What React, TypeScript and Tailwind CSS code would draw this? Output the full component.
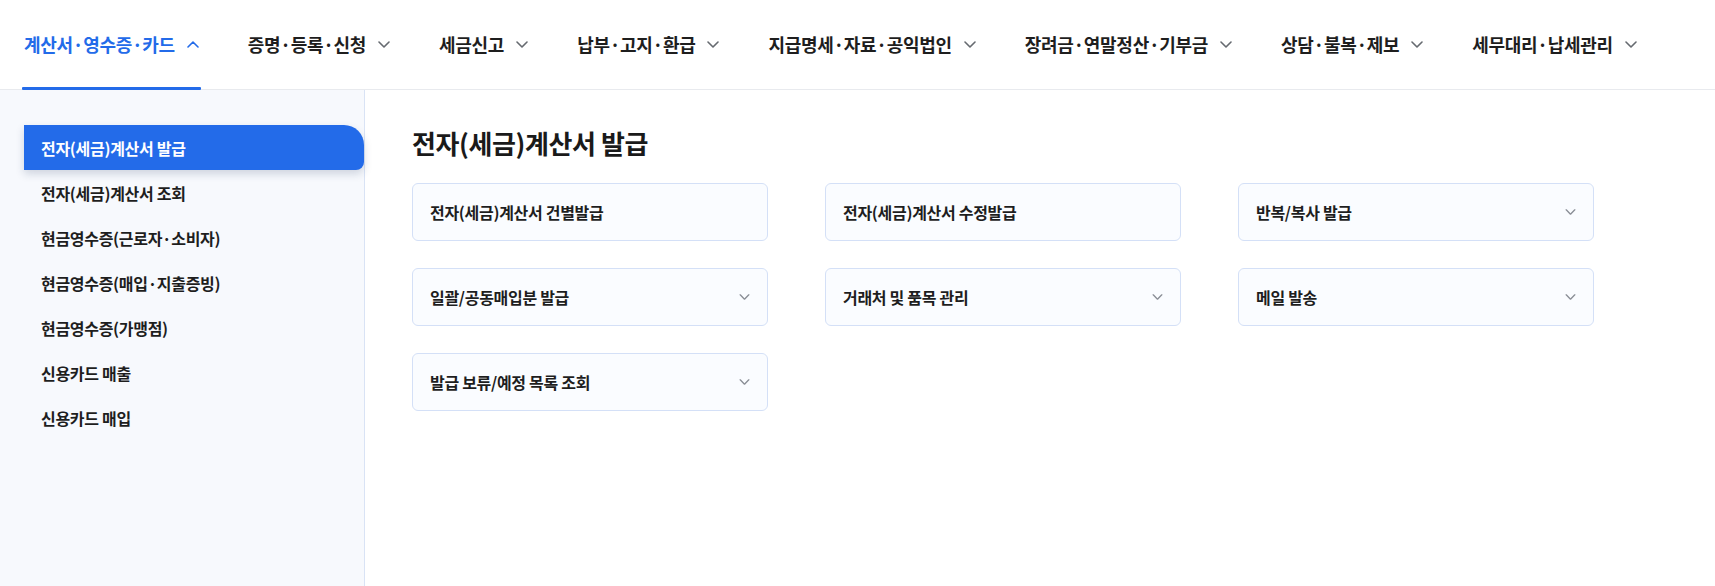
import React from "react";

const navItems = [
  "계산서·영수증·카드",
  "증명·등록·신청",
  "세금신고",
  "납부·고지·환급",
  "지급명세·자료·공익법인",
  "장려금·연말정산·기부금",
  "상담·불복·제보",
  "세무대리·납세관리",
];

const sideItems = [
  "전자(세금)계산서 발급",
  "전자(세금)계산서 조회",
  "현금영수증(근로자·소비자)",
  "현금영수증(매입·지출증빙)",
  "현금영수증(가맹점)",
  "신용카드 매출",
  "신용카드 매입",
];

const cards: { label: string; chevron: boolean }[] = [
  { label: "전자(세금)계산서 건별발급", chevron: false },
  { label: "전자(세금)계산서 수정발급", chevron: false },
  { label: "반복/복사 발급", chevron: true },
  { label: "일괄/공동매입분 발급", chevron: true },
  { label: "거래처 및 품목 관리", chevron: true },
  { label: "메일 발송", chevron: true },
  { label: "발급 보류/예정 목록 조회", chevron: true },
];

function Chevron({ up, className }: { up?: boolean; className?: string }) {
  return (
    <svg viewBox="0 0 12 7" className={className} fill="none">
      <path
        d={up ? "M1 6 L6 1 L11 6" : "M1 1 L6 6 L11 1"}
        stroke="currentColor"
        strokeWidth="1.6"
        strokeLinecap="round"
        strokeLinejoin="round"
      />
    </svg>
  );
}

export default function App() {
  return (
    <div
      className="h-screen w-full bg-white flex flex-col text-[#222]"
      style={{ fontFamily: '"Noto Sans CJK KR", "Noto Sans", sans-serif' }}
    >
      <header className="h-[90px] shrink-0 border-b border-[#e8eaee] flex items-stretch pl-[24px] gap-[49px]">
        {navItems.map((t, i) => (
          <div key={t} className="relative flex items-center gap-[12px]">
            <span
              className={
                "text-[18px] font-semibold tracking-[-0.3px] " +
                (i === 0 ? "text-[#236be9]" : "text-[#1e1e1e]")
              }
            >
              {t}
            </span>
            {i === 0 ? (
              <Chevron up className="w-[12px] h-[7px] text-[#236be9]" />
            ) : (
              <Chevron className="w-[12px] h-[7px] text-[#666a70]" />
            )}
            {i === 0 && (
              <div className="absolute left-[-2px] right-[-2px] bottom-[-1px] h-[3px] bg-[#236be9] rounded-[1px]" />
            )}
          </div>
        ))}
      </header>
      <div className="flex flex-1 min-h-0">
        <aside className="w-[365px] shrink-0 bg-[#f7f9fd] border-r border-[#d9e3f5] pt-[35px]">
          {sideItems.map((t, i) => (
            <div
              key={t}
              className={
                "ml-[24px] h-[45px] flex items-center pl-[17px] text-[16px] font-semibold tracking-[-0.3px] " +
                (i === 0
                  ? "bg-[#236be9] text-white rounded-tr-[20px] rounded-br-[8px] shadow-[0_4px_8px_rgba(30,50,90,0.18)]"
                  : "text-[#1e1e1e]")
              }
            >
              {t}
            </div>
          ))}
        </aside>
        <main className="flex-1 pl-[47px] pt-[36px]">
          <h1 className="text-[26px] leading-[34px] font-bold text-[#1a1a1a] tracking-[-0.4px]">
            전자(세금)계산서 발급
          </h1>
          <div className="mt-[23px] w-[1182px] grid grid-cols-3 gap-x-[57px] gap-y-[27px]">
            {cards.map((c) => (
              <div
                key={c.label}
                className="h-[58px] rounded-[6px] border border-[#d4e0f7] bg-[#fafcff] flex items-center justify-between pl-[17px] pr-[17px]"
              >
                <span className="text-[16px] font-semibold text-[#1e1e1e] tracking-[-0.3px]">
                  {c.label}
                </span>
                {c.chevron && (
                  <Chevron className="w-[11px] h-[6px] text-[#8a8e96]" />
                )}
              </div>
            ))}
          </div>
        </main>
      </div>
    </div>
  );
}
